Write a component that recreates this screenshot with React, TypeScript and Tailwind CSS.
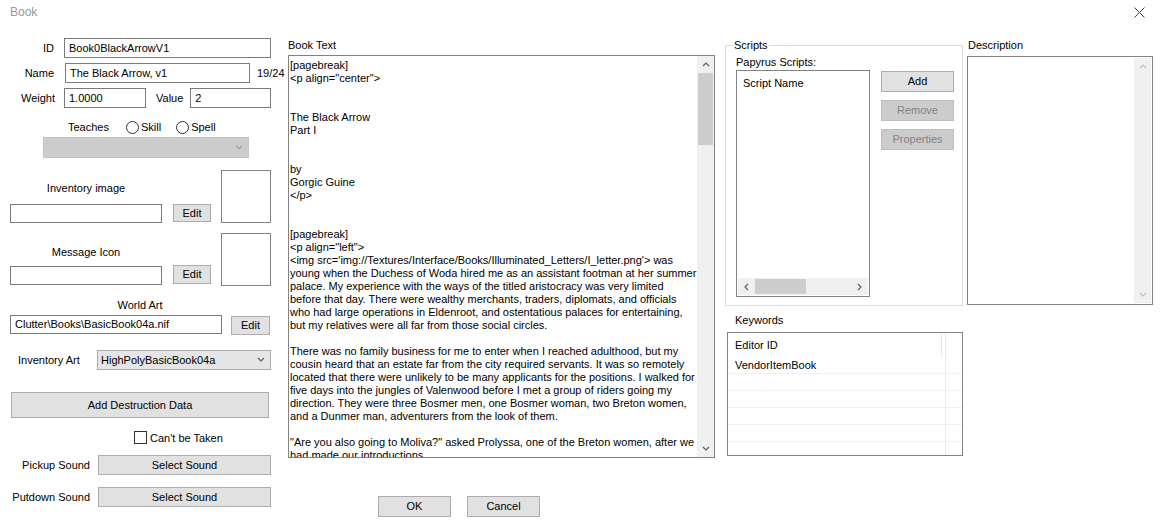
import React from 'react'

const bookLines = [
  '[pagebreak]',
  '<p align="center">',
  '',
  '',
  'The Black Arrow',
  'Part I',
  '',
  '',
  'by',
  'Gorgic Guine',
  '</p>',
  '',
  '',
  '[pagebreak]',
  '<p align="left">',
  "<img src='img://Textures/Interface/Books/Illuminated_Letters/I_letter.png'> was",
  'young when the Duchess of Woda hired me as an assistant footman at her summer',
  'palace. My experience with the ways of the titled aristocracy was very limited',
  'before that day. There were wealthy merchants, traders, diplomats, and officials',
  'who had large operations in Eldenroot, and ostentatious palaces for entertaining,',
  'but my relatives were all far from those social circles.',
  '',
  'There was no family business for me to enter when I reached adulthood, but my',
  'cousin heard that an estate far from the city required servants. It was so remotely',
  'located that there were unlikely to be many applicants for the positions. I walked for',
  'five days into the jungles of Valenwood before I met a group of riders going my',
  'direction. They were three Bosmer men, one Bosmer woman, two Breton women,',
  'and a Dunmer man, adventurers from the look of them.',
  '',
  '"Are you also going to Moliva?" asked Prolyssa, one of the Breton women, after we',
  'had made our introductions.',
]

const Chevron = ({ dir, color = '#606060' }: { dir: 'up' | 'down' | 'left' | 'right'; color?: string }) => {
  const pts = {
    up: '1,5 4,2 7,5',
    down: '1,2 4,5 7,2',
    left: '5,1 2,4 5,7',
    right: '2,1 5,4 2,7',
  }[dir]
  return (
    <svg width="8" height="8" viewBox="0 0 8 8">
      <polyline points={pts} fill="none" stroke={color} strokeWidth="1.2" />
    </svg>
  )
}

const Input = ({ className = '', value = '' }: { className?: string; value?: string }) => (
  <div className={`shrink-0 border border-[#7a7a7a] bg-white flex items-center pl-[4px] whitespace-nowrap overflow-hidden ${className}`}>
    {value}
  </div>
)

const Btn = ({ className = '', children, disabled }: { className?: string; children: React.ReactNode; disabled?: boolean }) => (
  <div
    className={`shrink-0 border flex items-center justify-center ${
      disabled ? 'bg-[#cccccc] border-[#bfbfbf] text-[#838383]' : 'bg-[#e1e1e1] border-[#adadad]'
    } ${className}`}
  >
    {children}
  </div>
)

const Radio = ({ label }: { label: string }) => (
  <div className="flex items-center">
    <div className="w-[13px] h-[13px] rounded-full border border-[#333333] bg-white" />
    <span className="ml-[2px]">{label}</span>
  </div>
)

export default function App() {
  return (
    <div className="w-[1167px] h-[531px] bg-white text-black text-[11px] leading-[13px] font-['Liberation_Sans',Arial,sans-serif] overflow-hidden">
      {/* title bar */}
      <div className="h-[24px] flex items-center justify-between pl-[10px] pr-[22px]">
        <span className="text-[12px] text-[#999999]">Book</span>
        <svg width="11" height="11" viewBox="0 0 11 11">
          <path d="M0.5 0.5 L10.5 10.5 M10.5 0.5 L0.5 10.5" stroke="#444444" strokeWidth="1" />
        </svg>
      </div>

      <div className="flex mt-[14px]">
        {/* left column */}
        <div className="w-[280px] shrink-0 flex flex-col">
          <div className="flex items-center h-[20px]">
            <span className="w-[54px] shrink-0 text-right">ID</span>
            <Input className="ml-[10px] w-[207px] h-[20px]" value="Book0BlackArrowV1" />
          </div>
          <div className="flex items-center h-[20px] mt-[5px]">
            <span className="w-[54px] shrink-0 text-right">Name</span>
            <Input className="ml-[11px] w-[185px] h-[20px]" value="The Black Arrow, v1" />
            <span className="ml-[7px] shrink-0 whitespace-nowrap">19/24</span>
          </div>
          <div className="flex items-center h-[20px] mt-[5px]">
            <span className="w-[55px] shrink-0 text-right">Weight</span>
            <Input className="ml-[9px] w-[82px] h-[20px]" value="1.0000" />
            <span className="ml-[10px] shrink-0">Value</span>
            <Input className="ml-[7px] w-[81px] h-[20px]" value="2" />
          </div>
          <div className="flex items-center h-[14px] mt-[12px]">
            <span className="ml-[68px]">Teaches</span>
            <div className="ml-[17px]">
              <Radio label="Skill" />
            </div>
            <div className="ml-[15px]">
              <Radio label="Spell" />
            </div>
          </div>
          <div className="ml-[43px] mt-[3px] w-[206px] h-[21px] bg-[#cccccc] border border-[#c4c4c4] flex items-center justify-end pr-[5px]">
            <Chevron dir="down" color="#a0a0a0" />
          </div>

          {/* inventory image */}
          <div className="flex mt-[12px]">
            <div className="w-[221px] flex flex-col">
              <div className="ml-[10px] w-[152px] text-center mt-[12px]">Inventory image</div>
              <div className="flex items-start mt-[9px]">
                <Input className="ml-[10px] w-[152px] h-[19px]" />
                <Btn className="ml-[11px] w-[38px] h-[18px]">Edit</Btn>
              </div>
            </div>
            <div className="w-[50px] h-[53px] border border-[#828282]" />
          </div>

          {/* message icon */}
          <div className="flex mt-[10px]">
            <div className="w-[221px] flex flex-col">
              <div className="ml-[10px] w-[152px] text-center mt-[13px]">Message Icon</div>
              <div className="flex items-start mt-[7px]">
                <Input className="ml-[10px] w-[152px] h-[19px]" />
                <Btn className="ml-[11px] w-[38px] h-[19px] -mt-[1px]">Edit</Btn>
              </div>
            </div>
            <div className="w-[50px] h-[53px] border border-[#828282]" />
          </div>

          {/* world art */}
          <div className="ml-[10px] w-[260px] text-center mt-[13px]">World Art</div>
          <div className="flex items-start mt-[3px]">
            <Input className="ml-[10px] w-[212px] h-[19px]" value="Clutter\Books\BasicBook04a.nif" />
            <Btn className="ml-[9px] w-[39px] h-[19px] mt-[1px]">Edit</Btn>
          </div>

          <div className="flex items-center mt-[15px] h-[20px]">
            <span className="ml-[18px] w-[67px] shrink-0 whitespace-nowrap">Inventory Art</span>
            <div className="ml-[12px] shrink-0 w-[174px] h-[20px] bg-[#e5e5e5] border border-[#acacac] flex items-center justify-between pl-[3px] pr-[5px]">
              <span>HighPolyBasicBook04a</span>
              <Chevron dir="down" />
            </div>
          </div>

          <Btn className="ml-[11px] mt-[22px] w-[258px] h-[26px] pt-[1px]">Add Destruction Data</Btn>

          <div className="flex items-center mt-[13px] h-[13px]">
            <div className="ml-[134px] shrink-0 w-[13px] h-[13px] border border-[#333333] bg-white" />
            <span className="ml-[3px] mt-[1px]">Can't be Taken</span>
          </div>

          <div className="flex items-center mt-[11px] h-[20px]">
            <span className="w-[90px] shrink-0 text-right pt-[1px]">Pickup Sound</span>
            <Btn className="ml-[8px] w-[173px] h-[20px] pt-[1px]">Select Sound</Btn>
          </div>
          <div className="flex items-center mt-[12px] h-[20px]">
            <span className="w-[90px] shrink-0 text-right pt-[1px]">Putdown Sound</span>
            <Btn className="ml-[8px] w-[173px] h-[20px] pt-[1px]">Select Sound</Btn>
          </div>
        </div>

        {/* right area */}
        <div className="ml-[8px] flex flex-col">
          <div className="flex">
            {/* book text */}
            <div className="w-[427px] flex flex-col">
              <div className="h-[13px] mt-[1px]">Book Text</div>
              <div className="mt-[3px] h-[403px] border border-[#828282] flex">
                <div className="flex-1 pl-[1px] pt-[3px] overflow-hidden whitespace-pre">
                  {bookLines.map((l, i) => (
                    <div key={i} className="h-[13px]">
                      {l}
                    </div>
                  ))}
                </div>
                <div className="w-[17px] bg-[#f0f0f0] flex flex-col items-center">
                  <div className="h-[17px] flex items-center justify-center">
                    <Chevron dir="up" />
                  </div>
                  <div className="w-[15px] h-[72px] bg-[#cdcdcd]" />
                  <div className="flex-1" />
                  <div className="h-[17px] flex items-center justify-center">
                    <Chevron dir="down" />
                  </div>
                </div>
              </div>
            </div>

            {/* scripts + keywords */}
            <div className="ml-[10px] w-[238px] flex flex-col">
              <div className="relative mt-[7px] h-[261px] border border-[#dcdcdc] flex flex-col">
                <span className="absolute -top-[7px] left-[7px] bg-white px-[1px]">Scripts</span>
                <div className="ml-[10px] mt-[10px]">Papyrus Scripts:</div>
                <div className="flex ml-[10px] mt-[1px]">
                  <div className="w-[134px] h-[227px] border border-[#828282] flex flex-col">
                    <div className="pl-[6px] mt-[6px] flex-1">Script Name</div>
                    <div className="h-[17px] bg-[#f0f0f0] flex items-center mb-[1px] mx-[1px]">
                      <div className="w-[17px] flex justify-center">
                        <Chevron dir="left" />
                      </div>
                      <div className="w-[51px] h-[15px] bg-[#cdcdcd]" />
                      <div className="flex-1" />
                      <div className="w-[17px] flex justify-center">
                        <Chevron dir="right" />
                      </div>
                    </div>
                  </div>
                  <div className="ml-[11px] mt-[1px] flex flex-col gap-[8px]">
                    <Btn className="w-[73px] h-[21px]">Add</Btn>
                    <Btn className="w-[73px] h-[21px]" disabled>Remove</Btn>
                    <Btn className="w-[73px] h-[21px]" disabled>Properties</Btn>
                  </div>
                </div>
              </div>
              <div className="ml-[10px] mt-[8px]">Keywords</div>
              <div className="ml-[2px] mt-[5px] w-[236px] h-[124px] border border-[#828282] flex flex-col overflow-hidden">
                <div className="h-[24px] shrink-0 flex items-center relative">
                  <span className="pl-[7px] pt-[1px]">Editor ID</span>
                  <div className="absolute left-[213px] top-0 h-[24px] w-[1px] bg-[#e5e5e5]" />
                  <div className="absolute left-[217px] top-0 h-[24px] w-[1px] bg-[#e5e5e5]" />
                </div>
                {['VendorItemBook', '', '', '', '', ''].map((k, i) => (
                  <div key={i} className="h-[17px] shrink-0 flex items-center border-b border-[#f0f0f0] relative">
                    <span className="pl-[7px]">{k}</span>
                    <div className="absolute left-[217px] top-0 h-[17px] w-[1px] bg-[#ececec]" />
                  </div>
                ))}
              </div>
            </div>

            {/* description */}
            <div className="ml-[4px] w-[186px] flex flex-col">
              <div className="h-[13px] ml-[1px] mt-[1px]">Description</div>
              <div className="mt-[4px] h-[249px] border border-[#828282] flex justify-end">
                <div className="w-[17px] bg-[#f0f0f0] flex flex-col items-center mr-[1px] my-[1px]">
                  <div className="h-[17px] flex items-center justify-center">
                    <Chevron dir="up" color="#c0c0c0" />
                  </div>
                  <div className="flex-1" />
                  <div className="h-[17px] flex items-center justify-center">
                    <Chevron dir="down" color="#c0c0c0" />
                  </div>
                </div>
              </div>
            </div>
          </div>

          {/* dialog buttons */}
          <div className="flex mt-[38px] ml-[90px] gap-[16px]">
            <Btn className="w-[73px] h-[21px]">OK</Btn>
            <Btn className="w-[73px] h-[21px]">Cancel</Btn>
          </div>
        </div>
      </div>
    </div>
  )
}
